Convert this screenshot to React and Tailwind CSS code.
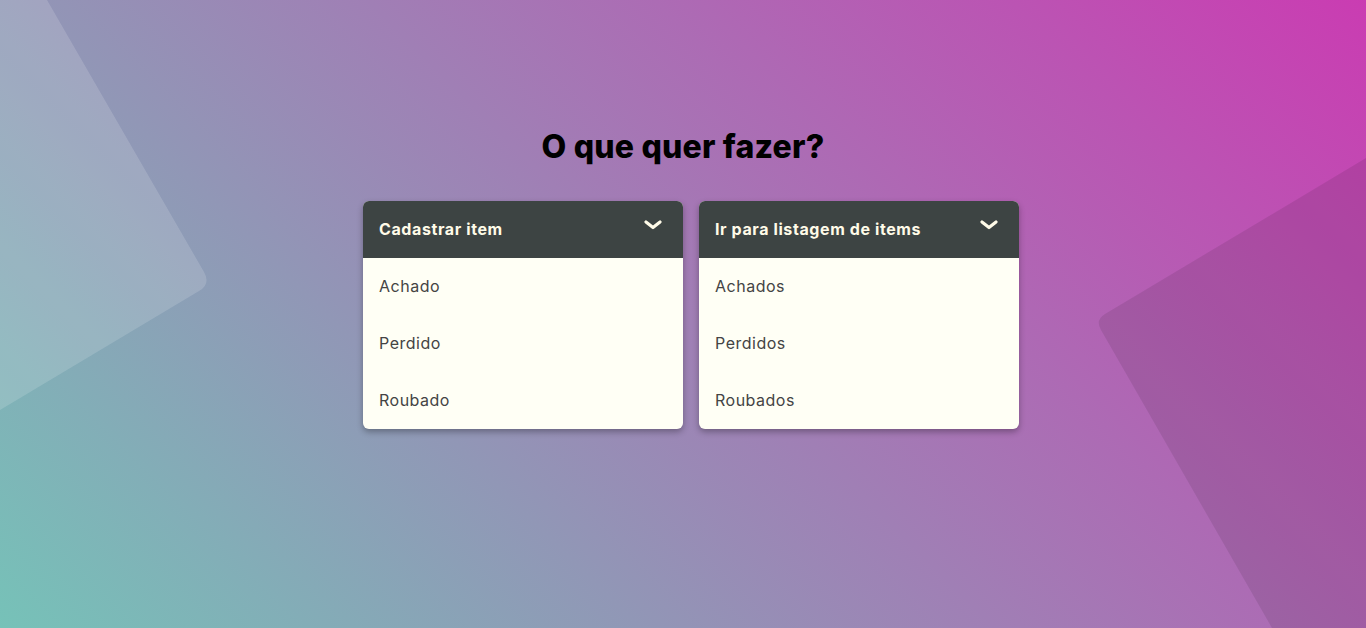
export default function App() {
  const cards = [
    { title: "Cadastrar item", items: ["Achado", "Perdido", "Roubado"] },
    { title: "Ir para listagem de items", items: ["Achados", "Perdidos", "Roubados"] },
  ];
  return (
    <div
      className="relative w-full h-[628px] overflow-hidden bg-[linear-gradient(45deg,#76c2b8_0%,#ca3cb2_100%)]"
      style={{ fontFamily: "Inter, 'Liberation Sans', sans-serif" }}
    >
      <svg className="absolute inset-0 w-full h-full pointer-events-none" viewBox="0 0 1366 628" preserveAspectRatio="none">
        <path d="M0,0 L47,0 L204,272 Q211,284 199,291 L0,410 Z" fill="#ffffff" fillOpacity="0.15" />
        <path d="M1366,158 L1366,628 L1272,628 L1101,330 Q1095,320 1105,314 Z" fill="#000000" fillOpacity="0.09" />
      </svg>
      <div className="relative flex flex-col items-center pt-[126px]">
        <h1 className="text-[32px] leading-[42px] font-extrabold text-black tracking-[0.2px]">O que quer fazer?</h1>
        <div className="flex gap-4 mt-[33px] ml-4">
          {cards.map((c) => (
            <div key={c.title} className="w-[320px] rounded-md overflow-hidden bg-[#fffff5] shadow-[0_3px_6px_rgba(0,0,0,0.3)]">
              <div className="h-[57px] bg-[#3d4443] flex items-center justify-between pl-4 pr-[21px]">
                <span className="text-[16px] font-bold text-[#fffbe8] tracking-[0.6px] pb-[2px]">{c.title}</span>
                <svg width="18" height="12" viewBox="0 0 18 12" className="-mt-[9px]">
                  <polyline points="2,3 9,8.5 16,3" fill="none" stroke="#fffbe8" strokeWidth="3.2" strokeLinecap="round" strokeLinejoin="round" />
                </svg>
              </div>
              {c.items.map((it) => (
                <div key={it} className="h-[57px] flex items-center pl-4 pb-[2px] text-[16px] text-[#444444] tracking-[0.5px]">
                  {it}
                </div>
              ))}
            </div>
          ))}
        </div>
      </div>
    </div>
  );
}
